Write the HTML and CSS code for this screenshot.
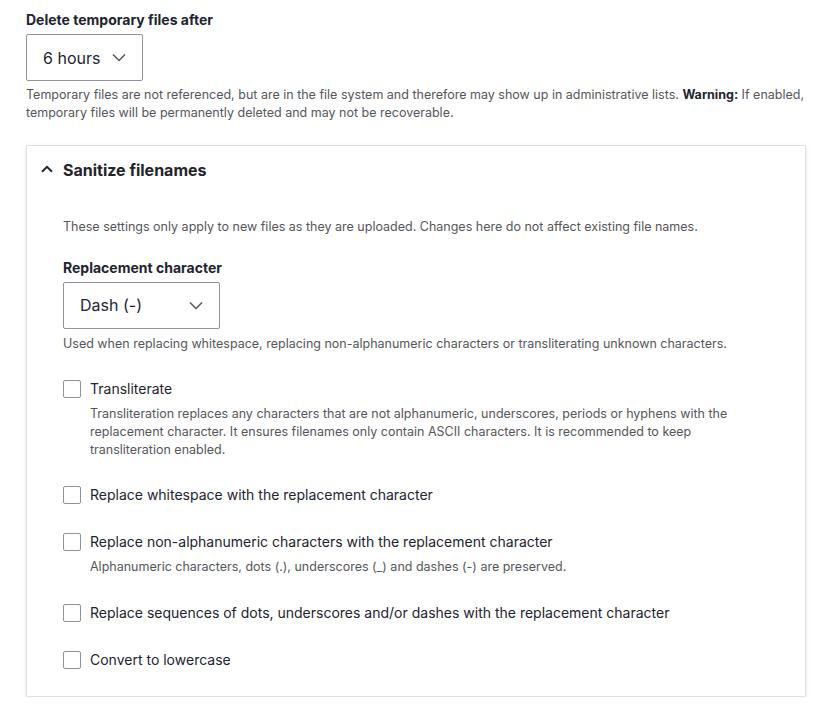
FILE: index.html
```html
<!DOCTYPE html>
<html lang="en">
<head>
    <meta charset="UTF-8">
    <meta name="viewport" content="width=device-width, initial-scale=1.0">
    <title>File system settings</title>
    <link rel="stylesheet" href="styles.css">
</head>
<body>
    <div class="page">
        <!-- temporary files -->
        <div class="form-item">
            <div class="form-label">Delete temporary files after</div>
            <div class="select select-hours">
                <span>6 hours</span>
                <svg width="14" height="9" viewBox="0 0 14 9"><path d="M1 1.5l6 6 6-6" fill="none" stroke="#545560" stroke-width="1.5"/></svg>
            </div>
            <div class="description">Temporary files are not referenced, but are in the file system and therefore may show up in administrative lists. <strong>Warning:</strong> If enabled, temporary files will be permanently deleted and may not be recoverable.</div>
        </div>

        <!-- sanitize filenames -->
        <details class="details" open>
            <summary class="summary">
                <svg width="12" height="8" viewBox="0 0 12 8"><path d="M1 6.8l5-5 5 5" fill="none" stroke="#222330" stroke-width="2"/></svg>
                Sanitize filenames
            </summary>
            <div class="details-body">
                <div class="description">These settings only apply to new files as they are uploaded. Changes here do not affect existing file names.</div>

                <div class="form-item inner">
                    <div class="form-label">Replacement character</div>
                    <div class="select select-dash">
                        <span>Dash (-)</span>
                        <svg width="14" height="9" viewBox="0 0 14 9"><path d="M1 1.5l6 6 6-6" fill="none" stroke="#545560" stroke-width="1.5"/></svg>
                    </div>
                    <div class="description">Used when replacing whitespace, replacing non-alphanumeric characters or transliterating unknown characters.</div>
                </div>

                <div class="checks">
                    <div class="check-item">
                        <label class="check-row"><input type="checkbox"> Transliterate</label>
                        <div class="description">Transliteration replaces any characters that are not alphanumeric, underscores, periods or hyphens with the replacement character. It ensures filenames only contain ASCII characters. It is recommended to keep transliteration enabled.</div>
                    </div>
                    <div class="check-item">
                        <label class="check-row"><input type="checkbox"> Replace whitespace with the replacement character</label>
                    </div>
                    <div class="check-item">
                        <label class="check-row"><input type="checkbox"> Replace non-alphanumeric characters with the replacement character</label>
                        <div class="description">Alphanumeric characters, dots (.), underscores (_) and dashes (-) are preserved.</div>
                    </div>
                    <div class="check-item">
                        <label class="check-row"><input type="checkbox"> Replace sequences of dots, underscores and/or dashes with the replacement character</label>
                    </div>
                    <div class="check-item">
                        <label class="check-row"><input type="checkbox"> Convert to lowercase</label>
                    </div>
                </div>
            </div>
        </details>
    </div>
</body>
</html>
```

FILE: styles.css
```css
body {
    font-family: Inter, "Noto Sans", sans-serif;
    color: #222330;
    background-color: #fff;
    margin: 0;
    padding: 0;
}

.page {
    padding: 11px 34px 0 26px;
}

.form-label {
    font-size: 14px;
    font-weight: 700;
    line-height: 18px;
    margin-bottom: 5px;
}

.select {
    display: flex;
    align-items: center;
    justify-content: space-between;
    height: 45px;
    border: 1px solid #8e929c;
    border-radius: 2px;
    padding: 0 16px;
    font-size: 16px;
    box-sizing: content-box;
}

.select-hours {
    width: 83px;
}

.select-dash {
    width: 123px;
}

.description {
    font-size: 12.5px;
    line-height: 17.6px;
    color: #55565b;
    margin-top: 5px;
}

.description strong {
    color: #222330;
}

.details {
    margin-top: 24px;
    border: 1px solid #dedfe4;
    border-radius: 2px;
    box-shadow: 0 1px 4px rgba(0, 0, 0, 0.1);
}

.summary {
    list-style: none;
    display: flex;
    align-items: center;
    gap: 10px;
    padding: 15px 20px 13px 14px;
    font-size: 16px;
    font-weight: 700;
    line-height: 18px;
    color: #232429;
    cursor: pointer;
}

.summary::-webkit-details-marker {
    display: none;
}

.summary svg {
    margin-bottom: 2px;
}

.details-body {
    padding: 26px 36px 26px 36px;
}

.details-body > .description {
    margin-top: 0;
}

.inner {
    margin-top: 23px;
}

.inner .description {
    margin-top: 6px;
}

.checks {
    margin-top: 27px;
    display: flex;
    flex-direction: column;
    gap: 27px;
}

.check-row {
    display: flex;
    align-items: center;
    gap: 9px;
    font-size: 14px;
    line-height: 20px;
}

.check-row input {
    appearance: none;
    -webkit-appearance: none;
    width: 18px;
    height: 18px;
    margin: 0;
    border: 1px solid #8e929c;
    border-radius: 2px;
    background: #fff;
    flex-shrink: 0;
}

.check-item .description {
    margin-left: 27px;
    margin-top: 6px;
}
```
